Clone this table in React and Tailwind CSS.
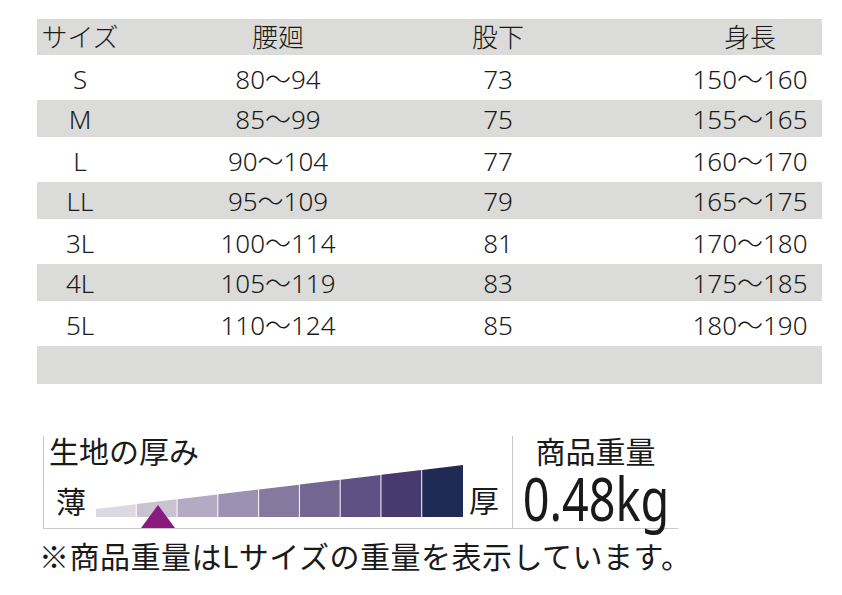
import React from 'react';

const rows = [
  { size: 'S', waist: '80〜94', inseam: '73', height: '150〜160' },
  { size: 'M', waist: '85〜99', inseam: '75', height: '155〜165' },
  { size: 'L', waist: '90〜104', inseam: '77', height: '160〜170' },
  { size: 'LL', waist: '95〜109', inseam: '79', height: '165〜175' },
  { size: '3L', waist: '100〜114', inseam: '81', height: '170〜180' },
  { size: '4L', waist: '105〜119', inseam: '83', height: '175〜185' },
  { size: '5L', waist: '110〜124', inseam: '85', height: '180〜190' },
];

const segColors = ['#dcd9e3', '#c8c2d2', '#b3abc4', '#9d91b2', '#85799f', '#736690', '#5f5083', '#463a6e', '#1f2a55'];

function Row({ cells, gray, className }) {
  return (
    <div className={`grid grid-cols-[86px_310px_130px_259px] items-center ${gray ? 'bg-[#dbdcd9]' : ''} ${className}`}>
      <div className="text-center">{cells[0]}</div>
      <div className="text-center">{cells[1]}</div>
      <div className="text-center">{cells[2]}</div>
      <div className="text-center pl-[115px]">{cells[3]}</div>
    </div>
  );
}

function Gauge() {
  const W = 367;
  const seg = W / 9;
  const top = x => 45 - (44 * x) / W;
  return (
    <svg width="367" height="64" viewBox="0 0 367 64" className="block">
      {segColors.map((c, i) => {
        const x0 = i * seg;
        const x1 = (i + 1) * seg - (i === 8 ? 0 : 1);
        return (
          <polygon key={i} fill={c}
            points={`${x0},${top(x0)} ${x1},${top(x1)} ${x1},53 ${x0},53`} />
        );
      })}
      <polygon fill="#8b1a7f" points="62,41 79,64 45,64" />
    </svg>
  );
}

export default function App() {
  return (
    <div className="w-[842px] h-[595px] bg-white overflow-hidden text-[#1a1a1a]"
      style={{ fontFamily: '"Noto Sans", "Noto Sans CJK JP", sans-serif' }}>
      {/* size table */}
      <div className="ml-[37px] mt-[19px] w-[785px] text-[26px] leading-[26px] font-light">
        <Row gray className="h-[36px]" cells={['サイズ', '腰廻', '股下', '身長']} />
        {rows.map((r, i) => (
          <Row key={r.size} gray={i % 2 === 1}
            className={i % 2 === 1 ? 'h-[37px]' : 'h-[45px] pt-[2px]'}
            cells={[r.size, r.waist, r.inseam, r.height]} />
        ))}
        <div className="h-[38px] bg-[#dbdcd9]" />
      </div>

      {/* thickness + weight */}
      <div className="ml-[43px] mt-[52px] flex" style={{ fontFamily: '"Noto Sans CJK JP", sans-serif' }}>
        <div className="w-[469px] h-[93px] border-l border-b border-[#c8c8c8]">
          <div className="pl-[5px] text-[30px] leading-[28px]">生地の厚み</div>
          <div className="flex h-[64px] pl-[12px]">
            <div className="mt-[21px] text-[30px] leading-[30px]">薄</div>
            <div className="ml-[10px]"><Gauge /></div>
            <div className="ml-[6px] mt-[20px] text-[30px] leading-[30px]">厚</div>
          </div>
        </div>
        <div className="w-[166px] h-[93px] border-l border-b border-[#c8c8c8] flex flex-col items-center">
          <div className="text-[30px] leading-[28px]">商品重量</div>
          <div className="mt-[6px] text-[60px] leading-[56px] scale-x-[0.78] whitespace-nowrap"
            style={{ fontFamily: '"Noto Sans", sans-serif' }}>0.48kg</div>
        </div>
      </div>

      <div className="mt-[8px] pl-[39px] text-[30px] leading-[36px] tracking-[0.5px] whitespace-nowrap"
        style={{ fontFamily: '"Noto Sans CJK JP", sans-serif' }}>
        ※商品重量はLサイズの重量を表示しています。
      </div>
    </div>
  );
}
